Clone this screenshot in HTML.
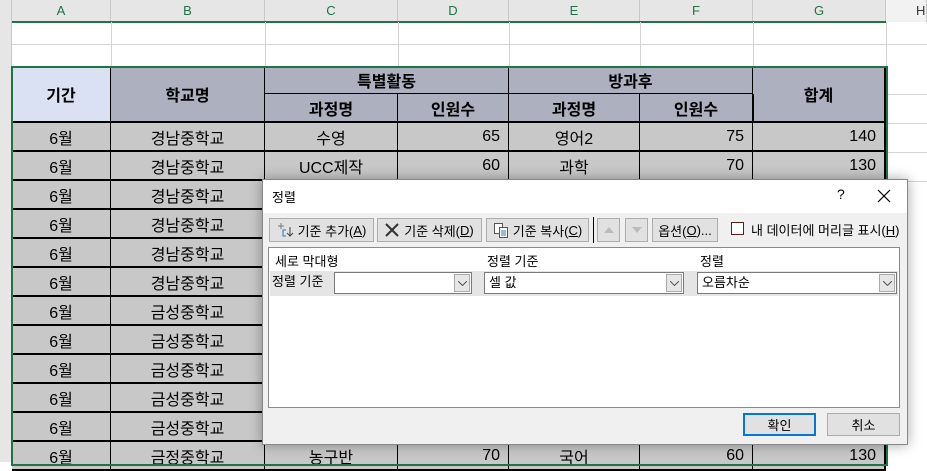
<!DOCTYPE html>
<html><head><meta charset="utf-8"><style>
*{box-sizing:border-box;margin:0;padding:0}
body{width:927px;height:462px;overflow:hidden;background:#fff;position:relative;font-family:"Liberation Sans","Noto Sans CJK KR",sans-serif;font-size:16px;color:#000}
.a{position:absolute}
.ch{position:absolute;top:0;height:22px;background:#e6e6e6;border-right:1px solid #c8c8c8;color:#217346;font-size:13px;text-align:center;line-height:22px}
.c{position:absolute;display:flex;align-items:center;justify-content:center;border-right:2px solid #000;border-bottom:2px solid #000;background:#c8c8c8;white-space:nowrap}
.r{justify-content:flex-end;padding-right:8px}
.h{background:#acb0bf;font-weight:bold}
.btn{position:absolute;background:#e1e1e1;border:1px solid #adadad;font-size:13px;display:flex;align-items:center;justify-content:center;white-space:nowrap;height:24px;top:218px}
.cb{position:absolute;background:#fff;border:1px solid #7a7a7a;height:22px;top:272px;font-size:13px;line-height:20px;padding-left:4px}
.dd{position:absolute;right:1px;top:1px;width:16px;height:18px;border:1px solid #aaa;background:#e6e6e6}
.dd svg{position:absolute;left:3px;top:6px}
.gl{position:absolute;background:#d4d4d4}
</style></head><body>
<div class="a" style="left:0;top:0;width:12px;height:462px;background:#e6e6e6;border-right:1px solid #c8c8c8"></div>
<div class="ch" style="left:12px;width:99px">A</div>
<div class="ch" style="left:111px;width:154px">B</div>
<div class="ch" style="left:265px;width:133px">C</div>
<div class="ch" style="left:398px;width:111px">D</div>
<div class="ch" style="left:509px;width:131px">E</div>
<div class="ch" style="left:640px;width:113px">F</div>
<div class="ch" style="left:753px;width:133px">G</div>
<div class="ch" style="left:886px;width:41px;background:#f2f2f2;color:#333;text-align:left;padding-left:30px">H</div>
<div class="a" style="left:12px;top:21px;width:874px;height:2px;background:#217346"></div>
<div class="gl" style="left:12px;top:44px;width:915px;height:1px"></div>
<div class="gl" style="left:111px;top:22px;width:1px;height:45px"></div>
<div class="gl" style="left:265px;top:22px;width:1px;height:45px"></div>
<div class="gl" style="left:398px;top:22px;width:1px;height:45px"></div>
<div class="gl" style="left:509px;top:22px;width:1px;height:45px"></div>
<div class="gl" style="left:640px;top:22px;width:1px;height:45px"></div>
<div class="gl" style="left:753px;top:22px;width:1px;height:45px"></div>
<div class="gl" style="left:886px;top:22px;width:1px;height:440px"></div>
<div class="gl" style="left:886px;top:94px;width:41px;height:1px"></div>
<div class="gl" style="left:886px;top:123px;width:41px;height:1px"></div>
<div class="gl" style="left:886px;top:152px;width:41px;height:1px"></div>
<div class="gl" style="left:886px;top:181px;width:41px;height:1px"></div>
<div class="c h" style="left:12px;top:67px;width:100px;height:56px;background:#d9e1f2">기간</div>
<div class="c h" style="left:111px;top:67px;width:155px;height:56px">학교명</div>
<div class="c h" style="left:265px;top:67px;width:245px;height:28px">특별활동</div>
<div class="c h" style="left:509px;top:67px;width:245px;height:28px">방과후</div>
<div class="c h" style="left:753px;top:67px;width:133px;height:56px">합계</div>
<div class="c h" style="left:265px;top:94px;width:134px;height:29px">과정명</div>
<div class="c h" style="left:398px;top:94px;width:112px;height:29px">인원수</div>
<div class="c h" style="left:509px;top:94px;width:132px;height:29px">과정명</div>
<div class="c h" style="left:640px;top:94px;width:114px;height:29px">인원수</div>
<div id="rows"></div>
<script>
var s=["경남","경남","경남","경남","경남","경남","금성","금성","금성","금성","금성","금정"];
var d=[["수영","65","영어2","75","140"],["UCC제작","60","과학","70","130"]];
var h="";
for(var i=0;i<12;i++){var y=123+i*29;
h+='<div class="c" style="left:12px;top:'+y+'px;width:100px;height:29px">6월</div>';
h+='<div class="c" style="left:111px;top:'+y+'px;width:155px;height:29px">'+s[i]+'중학교</div>';
var r=d[i]||["","","","",""];if(i==11)r=["농구반","70","국어","60","130"];
h+='<div class="c" style="left:265px;top:'+y+'px;width:134px;height:29px">'+r[0]+'</div>';
h+='<div class="c r" style="left:398px;top:'+y+'px;width:112px;height:29px">'+r[1]+'</div>';
h+='<div class="c" style="left:509px;top:'+y+'px;width:132px;height:29px">'+r[2]+'</div>';
h+='<div class="c r" style="left:640px;top:'+y+'px;width:114px;height:29px">'+r[3]+'</div>';
h+='<div class="c r" style="left:753px;top:'+y+'px;width:133px;height:29px">'+r[4]+'</div>';}
document.getElementById("rows").innerHTML=h;
</script>
<div class="a" style="left:11px;top:66px;width:877px;height:400px;border:2px solid #217346"></div>
<div class="a" style="left:262px;top:179px;width:646px;height:266px;background:#f0f0f0;border:1px solid #888;box-shadow:0 0 12px rgba(0,0,0,.35)">
 <div class="a" style="left:0;top:0;width:644px;height:33px;background:#fff"></div>
 <div class="a" style="left:9px;top:7px;font-size:13px">정렬</div>
 <div class="a" style="left:574px;top:6px;font-size:14px">?</div>
 <svg class="a" style="left:614px;top:9px" width="14" height="14"><path d="M1 1L13 13M13 1L1 13" stroke="#000" stroke-width="1.2"/></svg>
</div>
<div class="btn" style="left:269px;width:105px"><svg width="18" height="16" style="margin-right:3px"><path d="M4 1v6M1 4h6" stroke="#777"/><path d="M9 8h-3v6h3" stroke="#2a7ab8" fill="none"/><path d="M13 5v9M10 11l3 3 3-3" stroke="#444" fill="none"/></svg>기준 추가(<u>A</u>)</div>
<div class="btn" style="left:377px;width:105px"><svg width="14" height="14" style="margin-right:5px"><path d="M1 1L13 13M13 1L1 13" stroke="#333" stroke-width="2"/></svg>기준 삭제(<u>D</u>)</div>
<div class="btn" style="left:486px;width:103px"><svg width="16" height="16" style="margin-right:4px"><rect x="1.5" y="1.5" width="8" height="10" fill="#fff" stroke="#555"/><rect x="6.5" y="5.5" width="8" height="10" fill="#fff" stroke="#555"/><path d="M8 9h5M8 11h5M8 13h5" stroke="#2a7ab8"/></svg>기준 복사(<u>C</u>)</div>
<div class="a" style="left:593px;top:217px;width:1px;height:26px;background:#000"></div>
<div class="btn" style="left:597px;width:23px"><svg width="10" height="6"><path d="M0 6L5 0L10 6z" fill="#bbb"/></svg></div>
<div class="btn" style="left:625px;width:23px"><svg width="10" height="6"><path d="M0 0L5 6L10 0z" fill="#bbb"/></svg></div>
<div class="btn" style="left:652px;width:66px">옵션(<u>O</u>)...</div>
<div class="a" style="left:731px;top:222px;width:13px;height:13px;border:1px solid #5a1e1e;background:#fff"></div>
<div class="a" style="left:751px;top:220px;font-size:13px">내 데이터에 머리글 표시(<u>H</u>)</div>
<div class="a" style="left:268px;top:247px;width:632px;height:161px;background:#fff;border:1px solid #8a8a8a"></div>
<div class="a" style="left:275px;top:251px;font-size:13px">세로 막대형</div>
<div class="a" style="left:487px;top:251px;font-size:13px">정렬 기준</div>
<div class="a" style="left:700px;top:251px;font-size:13px">정렬</div>
<div class="a" style="left:270px;top:271px;width:628px;height:25px;background:#e5e5e5"></div>
<div class="a" style="left:272px;top:271px;font-size:13px">정렬 기준</div>
<div class="cb" style="left:334px;width:138px"><div class="dd"><svg width="9" height="5"><path d="M0 0L4.5 4.5L9 0" stroke="#555" fill="none"/></svg></div></div>
<div class="cb" style="left:484px;width:200px">셀 값<div class="dd"><svg width="9" height="5"><path d="M0 0L4.5 4.5L9 0" stroke="#555" fill="none"/></svg></div></div>
<div class="cb" style="left:697px;width:200px">오름차순<div class="dd"><svg width="9" height="5"><path d="M0 0L4.5 4.5L9 0" stroke="#555" fill="none"/></svg></div></div>
<div class="btn" style="left:743px;top:413px;width:73px;height:23px;border:2px solid #0078d7">확인</div>
<div class="btn" style="left:827px;top:413px;width:73px;height:23px">취소</div>
</body></html>
